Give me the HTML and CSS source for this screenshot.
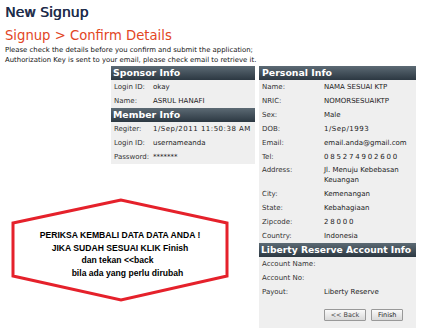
FILE: index.html
```html
<!DOCTYPE html>
<html>
<head>
  <meta charset="utf-8">
  <title>New Signup</title>
  <link rel="stylesheet" href="styles.css">
</head>
<body>

  <div class="page">
    <h1 class="title">New Signup</h1>
    <h2 class="subtitle">Signup &gt; Confirm Details</h2>
    <p class="intro">Please check the details before you confirm and submit the application;<br>Authorization Key is sent to your email, please check email to retrieve it.</p>

    <div class="columns">

      <div class="col-left">
        <div class="panel panel-left">
          <div class="panel-head">Sponsor Info</div>
          <table class="info">
            <tr><td class="lbl">Login ID:</td><td>okay</td></tr>
            <tr><td class="lbl">Name:</td><td>ASRUL HANAFI</td></tr>
          </table>
          <div class="panel-head">Member Info</div>
          <table class="info">
            <tr><td class="lbl">Regiter:</td><td class="date">1/Sep/2011 11:50:38 AM</td></tr>
            <tr><td class="lbl">Login ID:</td><td>usernameanda</td></tr>
            <tr><td class="lbl">Password:</td><td>*******</td></tr>
          </table>
        </div>

        <div class="notice">
          <svg class="notice-shape" width="218" height="104" viewBox="0 0 218 104">
            <polygon points="110,2 2,25 2,78 110,102 216,78 216,25" fill="#fff" stroke="#e5212b" stroke-width="3"/>
          </svg>
          <div class="notice-line">PERIKSA KEMBALI DATA DATA ANDA !</div>
          <div class="notice-line">JIKA SUDAH SESUAI KLIK Finish</div>
          <div class="notice-line line-back">dan tekan &lt;&lt;back</div>
          <div class="notice-line line-edit">bila ada yang perlu dirubah</div>
        </div>
      </div>

      <div class="panel panel-right">
        <div class="panel-head">Personal Info</div>
        <table class="info">
          <tr><td class="lbl">Name:</td><td>NAMA SESUAI KTP</td></tr>
          <tr><td class="lbl">NRIC:</td><td>NOMORSESUAIKTP</td></tr>
          <tr><td class="lbl">Sex:</td><td>Male</td></tr>
          <tr><td class="lbl">DOB:</td><td class="date">1/Sep/1993</td></tr>
          <tr><td class="lbl">Email:</td><td>email.anda@gmail.com</td></tr>
          <tr><td class="lbl">Tel:</td><td class="num">085274902600</td></tr>
          <tr class="two-line"><td class="lbl">Address:</td><td>Jl. Menuju Kebebasan<br>Keuangan</td></tr>
          <tr><td class="lbl">City:</td><td>Kemenangan</td></tr>
          <tr><td class="lbl">State:</td><td>Kebahagiaan</td></tr>
          <tr><td class="lbl">Zipcode:</td><td class="num">28000</td></tr>
          <tr><td class="lbl">Country:</td><td>Indonesia</td></tr>
        </table>
        <div class="panel-head head-wide">Liberty Reserve Account Info</div>
        <table class="info">
          <tr><td class="lbl" colspan="2">Account Name:</td></tr>
          <tr><td class="lbl" colspan="2">Account No:</td></tr>
          <tr><td class="lbl">Payout:</td><td>Liberty Reserve</td></tr>
          <tr>
            <td class="lbl"></td>
            <td class="actions">
              <button type="button" class="btn btn-back">&lt;&lt; Back</button>
              <button type="button" class="btn">Finish</button>
            </td>
          </tr>
        </table>
      </div>

    </div>
  </div>

</body>
</html>
```

FILE: styles.css
```css
body {
    margin: 0;
    background: #fff;
    font-family: "DejaVu Sans", Verdana, sans-serif;
    color: #222;
}

.page {
    padding: 4px 0 0 5px;
}

.title {
    margin: 0;
    font-size: 14px;
    line-height: 16px;
    font-weight: normal;
    color: #1d2b4a;
    text-shadow: 0.6px 0 0 #1d2b4a;
}

.subtitle {
    margin: 8px 0 0;
    font-size: 13.2px;
    line-height: 16px;
    font-weight: normal;
    color: #e2461f;
}

.intro {
    margin: 1px 0 0;
    font-size: 6.9px;
    line-height: 10px;
    color: #111;
}

.columns {
    display: flex;
    gap: 4px;
    margin-top: 1px;
}

.col-left {
    width: 250px;
}

.panel {
    background: #efefef;
}

.panel-left {
    width: 144px;
    margin-left: 106px;
}

.panel-right {
    width: 157px;
    padding-bottom: 5px;
}

.panel-head {
    height: 14px;
    line-height: 14px;
    padding-left: 3px;
    font-size: 9.4px;
    font-weight: bold;
    color: #fff;
    white-space: nowrap;
    overflow: hidden;
    background: linear-gradient(#5c6a74, #2c3842);
}

.panel-left .panel-head {
    padding-left: 2px;
}

.head-wide {
    padding-left: 2px;
    font-size: 9.2px;
}

table.info {
    border-collapse: collapse;
    width: 100%;
}

table.info td {
    padding: 2px 0;
    font-size: 7px;
    line-height: 10px;
    vertical-align: top;
    white-space: nowrap;
}

table.info tr.two-line td {
    line-height: 9.5px;
}

table.info td.lbl {
    padding-left: 3px;
    color: #333;
}

.panel-left td.lbl {
    width: 39px;
    padding-left: 2px;
}

.panel-right td.lbl {
    width: 62px;
}

.date {
    letter-spacing: 0.5px;
}

.num {
    letter-spacing: 1.8px;
}

table.info td.actions {
    padding-top: 10px;
}

.btn {
    height: 12px;
    margin: 0 1px 0 0;
    padding: 0;
    font-family: "DejaVu Sans", Verdana, sans-serif;
    font-size: 6.5px;
    line-height: 10px;
    color: #222;
    background: linear-gradient(#fafafa, #d9d9d9);
    border: 1px solid #999;
    border-radius: 1px;
}

.btn-back {
    width: 42px;
    color: #444;
}

.btn + .btn {
    width: 32px;
    margin-left: 2px;
}

.notice {
    position: relative;
    width: 218px;
    height: 104px;
    margin: 34px 0 0 6px;
    padding-top: 31px;
    box-sizing: border-box;
    font-family: "Liberation Sans", Arial, sans-serif;
    font-weight: bold;
    font-size: 8.6px;
    line-height: 12.7px;
    color: #000;
    text-align: center;
}

.notice-shape {
    position: absolute;
    left: 0;
    top: 0;
    z-index: 0;
}

.notice-line {
    position: relative;
    z-index: 1;
}

.line-back {
    padding-right: 5px;
}

.line-edit {
    padding-left: 15px;
}
```
